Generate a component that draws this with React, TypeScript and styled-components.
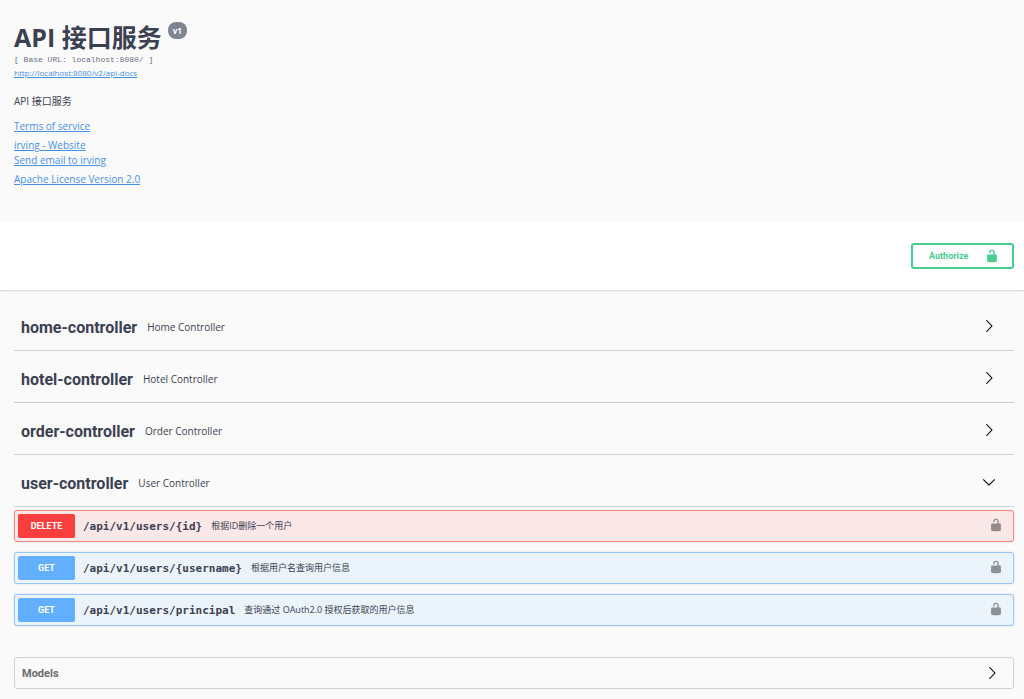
import React from "react";
import styled, { createGlobalStyle } from "styled-components";

const sans = `"Open Sans", "Noto Sans CJK SC", sans-serif`;
const heading = `Roboto, "Noto Sans CJK SC", sans-serif`;
const mono = `"DejaVu Sans Mono", "Noto Sans CJK SC", monospace`;

const GlobalStyle = createGlobalStyle`
  *, *::before, *::after { box-sizing: border-box; }
  body {
    margin: 0;
    background: #fafafa;
    color: #3b4151;
    font-family: ${sans};
    font-size: 10px;
  }
`;

const Info = styled.header`
  display: flex;
  flex-direction: column;
  align-items: flex-start;
  padding: 20px 14px 35px;
`;

const TitleRow = styled.div`
  display: flex;
  align-items: flex-start;
  gap: 6px;
`;

const Title = styled.h1`
  margin: 0;
  font-size: 25px;
  line-height: 34px;
  font-weight: 700;
  color: #3b4151;
`;

const Version = styled.span`
  margin-top: 2px;
  padding: 0 5px;
  border-radius: 8px;
  background: #7d8492;
  color: #fff;
  font-size: 8px;
  line-height: 17px;
  font-weight: 700;
`;

const BaseUrl = styled.code`
  color: #6b7080;
  font-family: "Liberation Mono", monospace;
  font-size: 8px;
  line-height: 12px;
`;

const DocsLink = styled.a`
  color: #4990e2;
  font-size: 8px;
  line-height: 14px;
`;

const Description = styled.p`
  margin: 14px 0 11px;
  font-size: 10px;
  line-height: 14px;
`;

const Links = styled.address`
  display: flex;
  flex-direction: column;
  align-items: flex-start;
  font-style: normal;
`;

const InfoLink = styled.a<{ $spaced?: boolean }>`
  margin-top: ${(p) => (p.$spaced ? 4 : 0)}px;
  color: #4990e2;
  font-size: 10px;
  line-height: 15px;
`;

const SchemeBar = styled.section`
  display: flex;
  justify-content: flex-end;
  padding: 21px 10px;
  background: #fff;
  box-shadow: 0 1px 2px rgba(0, 0, 0, 0.15);
`;

const AuthorizeButton = styled.button`
  display: flex;
  align-items: center;
  justify-content: space-between;
  width: 103px;
  height: 26px;
  padding: 0 13px 0 16px;
  border: 2px solid #49cc90;
  border-radius: 3px;
  background: transparent;
  color: #49cc90;
  font-family: ${heading};
  font-size: 9px;
  font-weight: 700;
`;

const Main = styled.main`
  padding: 9px 10px 10px 14px;
`;

const TagHeader = styled.h2`
  margin: 0;
  border-bottom: 1px solid #cfd0d3;
`;

const TagButton = styled.button`
  display: flex;
  align-items: center;
  width: 100%;
  height: 51px;
  padding: 2px 18px 0 7px;
  border: 0;
  background: transparent;
  color: #3b4151;
  text-align: left;
`;

const TagLabel = styled.span`
  display: flex;
  flex: 1;
  align-items: center;
  gap: 10px;
  padding-top: 3px;
`;

const TagName = styled.span`
  font-family: ${heading};
  font-size: 16px;
  font-weight: 700;
`;

const TagText = styled.small`
  font-family: ${sans};
  font-size: 10px;
`;

const Operations = styled.div`
  display: flex;
  flex-direction: column;
  gap: 10px;
  padding: 3px 0 31px;
`;

const tones = {
  DELETE: { solid: "#f93e3e", line: "#f98585", fill: "#fae7e7" },
  GET: { solid: "#61affe", line: "#94c6f8", fill: "#ebf3fb" },
};

type Method = keyof typeof tones;

const Operation = styled.button<{ $method: Method }>`
  display: flex;
  align-items: center;
  width: 100%;
  height: 32px;
  padding: 0 10px 2px 3px;
  border: 1px solid ${(p) => tones[p.$method].line};
  border-radius: 3px;
  background: ${(p) => tones[p.$method].fill};
  box-shadow: 0 0 2px rgba(0, 0, 0, 0.15);
  color: #3b4151;
  text-align: left;
`;

const MethodBadge = styled.span<{ $method: Method }>`
  width: 57px;
  margin-top: 2px;
  border-radius: 2px;
  background: ${(p) => tones[p.$method].solid};
  color: #fff;
  font-family: ${heading};
  font-size: 9px;
  line-height: 24px;
  font-weight: 700;
  text-align: center;
`;

const Path = styled.span`
  padding: 2px 9px 0 8px;
  font-family: ${mono};
  font-size: 11px;
  font-weight: 700;
`;

const Summary = styled.span`
  flex: 1;
  padding-top: 1px;
  font-family: ${sans};
  font-size: 9px;
`;

const ModelsButton = styled.button`
  display: flex;
  align-items: center;
  justify-content: space-between;
  width: 100%;
  height: 32px;
  padding: 0 14px 0 7px;
  border: 1px solid #cfd0d3;
  border-radius: 3px;
  background: transparent;
  color: #6b6b6b;
  font-family: ${heading};
  font-size: 11px;
  font-weight: 700;
`;

function Lock({ color, opacity = 1 }: { color: string; opacity?: number }) {
  return (
    <svg width="14" height="14" viewBox="0 0 20 20" fill={color} opacity={opacity} aria-hidden="true">
      <path d="M15.8 8H14V5.6C14 2.703 12.665 1 10 1 7.334 1 6 2.703 6 5.6V6h2v-.801C8 3.754 8.797 3 10 3c1.203 0 2 .754 2 2.199V8H4c-.553 0-1 .646-1 1.199V17c0 .549.428 1.139.951 1.307l1.197.387C5.672 18.861 6.55 19 7.1 19h5.8c.549 0 1.428-.139 1.951-.307l1.196-.387c.524-.167.953-.757.953-1.306V9.199C17 8.646 16.352 8 15.8 8z" />
    </svg>
  );
}

function Arrow({ open = false }: { open?: boolean }) {
  return (
    <svg width="14" height="14" viewBox="0 0 20 20" aria-hidden="true">
      {open ? (
        <path d="M17.418 6.109c.272-.268.709-.268.979 0s.271.701 0 .969l-7.908 7.83c-.27.268-.707.268-.979 0l-7.908-7.83c-.27-.268-.27-.701 0-.969.271-.268.709-.268.979 0L10 13.25l7.418-7.141z" />
      ) : (
        <path d="M13.25 10L6.109 2.58c-.268-.27-.268-.707 0-.979.268-.27.701-.27.969 0l7.83 7.908c.268.271.268.709 0 .979l-7.83 7.908c-.268.271-.701.27-.969 0-.268-.269-.268-.707 0-.979L13.25 10z" />
      )}
    </svg>
  );
}

const tags = [
  { name: "home-controller", text: "Home Controller", open: false },
  { name: "hotel-controller", text: "Hotel Controller", open: false },
  { name: "order-controller", text: "Order Controller", open: false },
  { name: "user-controller", text: "User Controller", open: true },
];

const operations: { method: Method; path: string; summary: string }[] = [
  { method: "DELETE", path: "/api/v1/users/{id}", summary: "根据ID删除一个用户" },
  { method: "GET", path: "/api/v1/users/{username}", summary: "根据用户名查询用户信息" },
  { method: "GET", path: "/api/v1/users/principal", summary: "查询通过 OAuth2.0 授权后获取的用户信息" },
];

export default function App() {
  return (
    <>
      <GlobalStyle />
      <Info>
        <TitleRow>
          <Title>API 接口服务</Title>
          <Version>v1</Version>
        </TitleRow>
        <BaseUrl>[ Base URL: localhost:8080/ ]</BaseUrl>
        <DocsLink href="http://localhost:8080/v2/api-docs">http://localhost:8080/v2/api-docs</DocsLink>
        <Description>API 接口服务</Description>
        <Links>
          <InfoLink href="#terms">Terms of service</InfoLink>
          <InfoLink href="#website" $spaced>irving - Website</InfoLink>
          <InfoLink href="#email">Send email to irving</InfoLink>
          <InfoLink href="#license" $spaced>Apache License Version 2.0</InfoLink>
        </Links>
      </Info>
      <SchemeBar>
        <AuthorizeButton type="button">
          Authorize
          <Lock color="#49cc90" />
        </AuthorizeButton>
      </SchemeBar>
      <Main>
        {tags.map((tag) => (
          <TagHeader key={tag.name}>
            <TagButton type="button" aria-expanded={tag.open}>
              <TagLabel>
                <TagName>{tag.name}</TagName>
                <TagText>{tag.text}</TagText>
              </TagLabel>
              <Arrow open={tag.open} />
            </TagButton>
          </TagHeader>
        ))}
        <Operations>
          {operations.map((op) => (
            <Operation key={op.path} type="button" $method={op.method}>
              <MethodBadge $method={op.method}>{op.method}</MethodBadge>
              <Path>{op.path}</Path>
              <Summary>{op.summary}</Summary>
              <Lock color="#000" opacity={0.4} />
            </Operation>
          ))}
        </Operations>
        <ModelsButton type="button" aria-expanded={false}>
          Models
          <Arrow />
        </ModelsButton>
      </Main>
    </>
  );
}
